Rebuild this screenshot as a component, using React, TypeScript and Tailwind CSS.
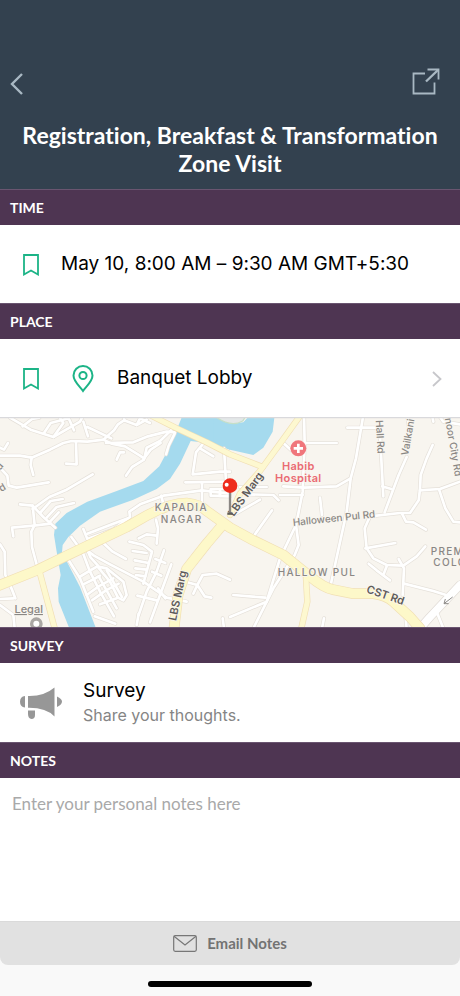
import { useState } from "react";
import type { ReactNode } from "react";

const minorRoads = [
  // west bank
  "M0 122 L60 122 L95 128 L150 104 L190 84 L215 78 L262 80 L310 74 L335 86 L375 94 L420 122 L432 130",
  "M95 128 L92 150 L100 180",
  "M0 98 L12 104 L24 84",
  "M228 82 L230 148 L198 146",
  "M350 134 L360 112 L372 112",
  "M378 182 L396 156 L432 134 L440 98 L480 78 L515 44",
  "M310 74 L342 46 L354 28 L372 16 L410 30 L440 14",
  "M318 84 L400 82 L444 64 L500 50 L525 52",
  "M432 130 L452 104 L482 84",
  "M30 8 L92 44 L160 66 L205 40 L240 20 L250 0",
  "M68 34 L96 12 L118 8",
  "M132 54 L152 24 L206 10 L222 46",
  "M160 66 L190 24 L178 6",
  "M250 20 L264 64 M262 36 L334 70",
  "M374 18 L370 0 M410 30 L420 10 L450 24",
  "M498 118 L506 92 L524 56",
  "M0 158 L22 182 L26 212 L50 218 L146 202",
  "M98 282 L148 246 L200 224 L278 178",
  "M60 268 L98 272 L130 306 L166 338",
  "M98 272 L104 330 L94 350 L96 396 L112 456",
  "M40 364 L36 338 L100 332 L152 326",
  "M120 294 L152 258 L188 252",
  "M140 308 L170 276 L222 264",
  "M150 320 L176 292",
  "M0 388 L14 410 L16 480 L36 524 L46 550",
  "M0 552 L40 550 M0 570 L40 600 L44 640",
  // east bank
  "M250 342 L262 372 L340 344 L390 306 L388 290 L420 268 L490 242 L606 226 L690 236",
  "M262 356 L340 326 L384 310",
  "M556 202 L690 200 M606 202 L606 262",
  "M632 222 L690 222 M632 222 L632 242 L690 244 M660 222 L660 244",
  "M608 88 L588 112 L578 178 L660 170 L690 170",
  "M600 100 L640 124 M672 100 L678 200",
  "M484 242 L490 268",
  "M214 366 L248 412 L270 470 L300 530 L342 604",
  "M250 398 L282 422 L330 448 L430 500 L500 548 L560 560",
  "M310 384 L338 410 L378 432",
  "M262 404 L272 428 L294 452",
  "M238 486 L268 468 L292 454 L320 460 L370 500 L380 540 L370 556 L354 548 L330 500 L292 454",
  "M250 508 L282 492 L300 482 M260 540 L296 514 L340 490 M276 556 L318 526 L356 506",
  "M206 436 L240 490 L280 590",
  "M296 484 L350 580 M320 466 L366 546",
  "M300 568 L350 550",
  "M284 604 L346 626",
  "M468 314 L474 340 L470 386 M416 370 L440 358 L470 362",
  "M388 380 L430 390 L456 410 L448 440 L430 506",
  "M398 408 L440 414 M404 436 L446 444 M406 460 L440 464 M408 480 L436 484",
  "M492 406 L470 470 L440 530 L416 600",
  "M514 448 L480 540 L450 622",
  "M412 542 L470 556 M416 596 L410 630",
  "M466 432 L496 444 M456 470 L484 482 M474 520 L496 550",
  "M556 500 L592 510 L608 480 L650 476 L690 494",
  "M592 510 L580 536 M592 510 L614 544 L634 548",
  "M668 610 L672 640",
  // Halloween Pul side
  "M912 0 L914 84 L908 230 L888 330 L896 390 L884 420 L820 520 L760 640",
  "M914 84 L1010 84",
  "M850 84 L874 106",
  "M1090 0 L1068 130 L1052 190 L1010 214 L912 218 L850 214",
  "M1052 190 L1040 290 L1016 400 L992 510",
  "M1042 38 L1140 38",
  "M720 216 L800 216 M740 238 L820 240 L836 256 M840 240 L908 240",
  "M700 300 L780 254",
  "M816 286 L762 362",
  "M960 248 L966 300",
  "M888 330 L840 430 L800 560 L690 606",
  "M700 540 L796 548",
  "M1140 60 L1150 244 M1146 214 L1174 222",
  "M1220 126 L1196 180 L1154 292",
  "M1110 304 L1200 294 L1230 294 L1256 256 L1260 222 L1262 180 L1280 130 L1298 90",
  "M1260 226 L1320 222 L1380 200",
  "M1206 296 L1218 320 L1240 322 L1278 344",
  "M1110 304 L1094 340 L1100 400 L1120 430 L1160 450 L1210 452 L1250 424 L1276 394",
  "M1096 400 L1186 384",
  "M1106 446 L1130 466 L1170 496 M1160 454 L1150 480",
  "M1196 432 L1212 460 L1208 540",
  "M1212 506 L1300 528 L1350 544",
  "M1318 226 L1336 280 L1360 320 L1380 322",
  "M1316 0 L1330 20 L1380 28",
  "M1222 0 L1230 60 M1296 0 L1300 20",
  "M972 610 L966 640 M1216 600 L1220 640",
  "M1310 590 L1330 640",
];

const wideRoads = ["M1260 640 L1290 606 L1380 510"];

const mainRoads = [
  "M-10 514 L110 466 L200 422 L380 336 L440 302 Q510 264 560 264 Q600 268 620 288 L690 338 L760 376 L850 420 L930 484 Q970 518 1000 524 L1060 536 L1120 536 Q1160 542 1180 560 L1230 606 L1260 640",
  "M664 334 L620 386 L560 462 L534 540 L522 640",
];

const yellowRoads = [
  "M450 0 L530 40 L620 82 L690 118 L788 156",
  "M902 0 L840 86 L780 168 L720 236 L690 300",
  "M118 468 L140 550 L164 640",
  "M918 490 L922 560 L904 640",
];

const HospitalBadge = () => (
  <g>
    <circle cx="895" cy="100" r="24" fill="#f0767c" />
    <path d="M895 86 V114 M881 100 H909" stroke="#fff" strokeWidth="8" />
  </g>
);

const MapPin = () => (
  <g>
    <path d="M690 225 V296" stroke="#8b8784" strokeWidth="7" />
    <path d="M682 296 H698" stroke="#5f5b58" strokeWidth="7" />
    <circle cx="690" cy="212" r="22" fill="#ee2b1c" />
    <circle cx="680" cy="209" r="6" fill="#fff" />
  </g>
);

const VenueMap = () => (
  <svg
    viewBox="0 6 1380 630"
    preserveAspectRatio="xMidYMid slice"
    className="block h-[210px] w-full bg-[#f8f5ef] font-['Inter','Liberation_Sans',sans-serif]"
    role="img"
    aria-label="Map of the venue"
  >
    <rect y="0" width="1380" height="640" fill="#f8f5ef" />
    <g fill="#a5daee">
      <path d="M548 0 L640 0 L690 26 L690 104 L640 86 L572 78 L540 146 L510 192 L470 222 L400 254 L300 290 L240 332 L205 366 L188 390 L186 412 L240 516 L288 640 L208 640 L176 560 L174 520 L182 480 L170 410 L162 360 L166 326 L200 294 L262 260 L340 232 L430 198 L478 154 L512 90 Z" />
      <path d="M640 0 L690 26 L730 22 L750 0 L824 0 L818 50 L790 98 L760 120 L690 104 L640 80 Z" />
    </g>
    <path
      d="M640 0 Q690 40 728 18 L740 0 Z"
      fill="#e3e7e8"
      stroke="#c5dfc8"
      strokeWidth="4"
    />
    <g fill="none" strokeLinecap="round" strokeLinejoin="round">
      {minorRoads.map((d) => (
        <path key={d} d={d} stroke="#e5e0d9" strokeWidth="12" />
      ))}
      {wideRoads.map((d) => (
        <path key={d} d={d} stroke="#e0dbd5" strokeWidth="27" />
      ))}
      {minorRoads.map((d) => (
        <path key={d} d={d} stroke="#fff" strokeWidth="8" />
      ))}
      {wideRoads.map((d) => (
        <path key={d} d={d} stroke="#fff" strokeWidth="23" />
      ))}
      {yellowRoads.map((d) => (
        <path key={d} d={d} stroke="#f1dfb4" strokeWidth="19" />
      ))}
      {mainRoads.map((d) => (
        <path key={d} d={d} stroke="#f1dfb4" strokeWidth="32" />
      ))}
      {yellowRoads.map((d) => (
        <path key={d} d={d} stroke="#fdf8d0" strokeWidth="15" />
      ))}
      {mainRoads.map((d) => (
        <path key={d} d={d} stroke="#fdf8c9" strokeWidth="28" />
      ))}
    </g>
    <g
      fill="#8a8784"
      stroke="#f8f5ef"
      strokeWidth="5"
      paintOrder="stroke"
      fontSize="30"
      fontWeight="500"
      textAnchor="middle"
    >
      <g letterSpacing="4">
        <text x="544" y="287">KAPADIA</text>
        <text x="545" y="323">NAGAR</text>
        <text x="951" y="483">HALLOW PUL</text>
        <text x="1292" y="420" textAnchor="start">PREMIER</text>
        <text x="1300" y="454" textAnchor="start">COLONY</text>
      </g>
      <text transform="translate(1003 320) rotate(-6)">Halloween Pul Rd</text>
      <text transform="translate(1130 66) rotate(87)">Hall Rd</text>
      <text transform="translate(1234 68) rotate(-80)">Vailkani</text>
      <text transform="translate(1350 98) rotate(80)">noor City Rd</text>
      <text transform="translate(12 226) rotate(-30)">d</text>
      <text transform="translate(6 160) rotate(-50)">d</text>
      <g fill="#5f5c59" fontWeight="600" fontSize="33">
        <text transform="translate(544 544) rotate(-78)">LBS Marg</text>
        <text transform="translate(746 244) rotate(-54)">LBS Marg</text>
        <text transform="translate(1153 551) rotate(19)">CST Rd</text>
      </g>
      <g fill="#ea6b73" fontWeight="600" fontSize="33" letterSpacing="1">
        <text x="895" y="164">Habib</text>
        <text x="895" y="201">Hospital</text>
      </g>
      <text x="86" y="594" fontSize="33" textDecoration="underline">
        Legal
      </text>
    </g>
    <circle
      cx="109"
      cy="626"
      r="14"
      fill="#fff"
      stroke="#aaa7a4"
      strokeWidth="10"
    />
    <path
      d="M1332 566 L1358 546 M1332 566 L1346 566 M1332 566 L1336 552"
      fill="none"
      stroke="#8f8c89"
      strokeWidth="3"
    />
    <path d="M0 8 H1380" stroke="#d9d9dc" strokeWidth="4" />
    <HospitalBadge />
    <MapPin />
  </svg>
);

const BackIcon = () => (
  <svg width="14" height="22" viewBox="0 0 14 22" fill="none" aria-hidden="true">
    <path d="M12 1 L2 11 L12 21" stroke="#a9b8c3" strokeWidth="2.4" />
  </svg>
);

const ShareIcon = () => (
  <svg width="28" height="28" viewBox="0 0 28 28" fill="none" aria-hidden="true">
    <g stroke="#a9b8c3" strokeWidth="1.8">
      <path d="M13 5.5 H1.5 V25.5 H22.5 V14.5" />
      <path d="M15.5 1.5 H26.5 V11.5" />
      <path d="M26 2 L14 13.5" strokeWidth="2.4" />
    </g>
  </svg>
);

const BookmarkIcon = () => (
  <svg width="16" height="22" viewBox="0 0 16 22" fill="none" aria-hidden="true">
    <path
      d="M1 1 H15 V20.5 L8 16.5 L1 20.5 Z"
      stroke="#1cb487"
      strokeWidth="1.8"
    />
  </svg>
);

const PlaceIcon = () => (
  <svg width="22" height="28" viewBox="0 0 22 28" fill="none" aria-hidden="true">
    <g stroke="#1cb487" strokeWidth="2">
      <path d="M11 26 C8 21.5 1.5 16.5 1.5 10.5 A9.5 9.5 0 0 1 20.5 10.5 C20.5 16.5 14 21.5 11 26 Z" />
      <circle cx="11" cy="10.5" r="3.6" />
    </g>
  </svg>
);

const ChevronIcon = () => (
  <svg width="10" height="16" viewBox="0 0 10 16" fill="none" aria-hidden="true">
    <path d="M1 1 L8.5 8 L1 15" stroke="#c7c7cb" strokeWidth="1.8" />
  </svg>
);

const MegaphoneIcon = () => (
  <svg width="42" height="32" viewBox="0 0 42 32" fill="#979797" aria-hidden="true">
    <path d="M5 9 V20.5 Q0 20 0 14.8 Q0 9.5 5 9 Z" />
    <path d="M8 9 Q24 9.5 34.5 0.5 V29.5 Q26 20.5 8 20.8 Z" />
    <path d="M37 9.5 Q42 12 42 14.5 Q42 17.5 37 20 Z" />
    <path d="M8 23.5 H15 V28 Q15 32 11.5 32 Q8 31.5 8 27 Z" />
  </svg>
);

const MailIcon = () => (
  <svg width="24" height="17" viewBox="0 0 24 17" fill="none" aria-hidden="true">
    <g stroke="#777" strokeWidth="1.2">
      <rect x="0.7" y="0.7" width="22.6" height="15.6" rx="1.5" />
      <path d="M1 1.2 L12 10 L23 1.2" />
    </g>
  </svg>
);

const SectionHeader = ({ children }: { children: ReactNode }) => (
  <h2 className="flex h-9 items-center border-t border-[#6a5570] bg-[#4e3552] px-2.5 pt-px text-sm font-bold text-white">
    {children}
  </h2>
);

const BookmarkButton = ({ label }: { label: string }) => {
  const [saved, setSaved] = useState(false);

  return (
    <button
      type="button"
      aria-label={label}
      aria-pressed={saved}
      className="cursor-pointer"
      onClick={() => setSaved(!saved)}
    >
      <BookmarkIcon />
    </button>
  );
};

export default function App() {
  const [notes, setNotes] = useState("");

  return (
    <div className="flex min-h-screen flex-col bg-white font-['Lato','Open_Sans',sans-serif] [font-variant-ligatures:none]">
      <header className="bg-[#33414f] pt-16 pb-3">
        <div className="flex h-10 items-center justify-between pr-5 pl-2.5">
          <button type="button" aria-label="Back" className="cursor-pointer">
            <BackIcon />
          </button>
          <button type="button" aria-label="Share" className="cursor-pointer pb-1">
            <ShareIcon />
          </button>
        </div>
        <h1 className="px-4 pt-[17px] text-center text-[23px] leading-7 font-bold text-white">
          Registration, Breakfast &amp; Transformation Zone Visit
        </h1>
      </header>
      <main className="flex grow flex-col">
        <SectionHeader>TIME</SectionHeader>
        <div className="flex h-[78px] items-center gap-[22px] px-[23px] pt-px font-['Inter','Liberation_Sans',sans-serif]">
          <BookmarkButton label="Bookmark time" />
          <p className="text-[19px] text-black">
            May 10, 8:00 AM – 9:30 AM GMT+5:30
          </p>
        </div>
        <SectionHeader>PLACE</SectionHeader>
        <div className="flex h-[78px] items-center gap-[33px] pt-px pr-[18px] pl-[23px] font-['Inter','Liberation_Sans',sans-serif]">
          <BookmarkButton label="Bookmark place" />
          <a href="#place" className="flex grow items-center">
            <PlaceIcon />
            <span className="grow pl-[23px] text-[19px] text-black">
              Banquet Lobby
            </span>
            <ChevronIcon />
          </a>
        </div>
        <VenueMap />
        <SectionHeader>SURVEY</SectionHeader>
        <a
          href="#survey"
          className="flex h-[79px] items-center gap-[21px] px-5 font-['Inter','Liberation_Sans',sans-serif]"
        >
          <MegaphoneIcon />
          <span className="flex flex-col">
            <span className="text-[19px] leading-6 text-black">Survey</span>
            <span className="text-base leading-6 text-[#858585]">
              Share your thoughts.
            </span>
          </span>
        </a>
        <SectionHeader>
          <label htmlFor="notes">NOTES</label>
        </SectionHeader>
        <textarea
          id="notes"
          value={notes}
          onChange={(event) => setNotes(event.target.value)}
          placeholder="Enter your personal notes here"
          className="block w-full grow resize-none px-3 py-3.5 text-[17px] leading-6 text-black outline-none placeholder:text-[#a9a9a9]"
        />
      </main>
      <footer className="bg-[#f9f9f9]">
        <button
          type="button"
          className="flex h-11 w-full cursor-pointer items-center justify-center gap-2.5 rounded-b-lg border-t border-[#dadada] bg-[#e1e1e1] text-[15px] font-bold text-[#737373]"
        >
          <MailIcon />
          Email Notes
        </button>
        <div className="flex h-[31px] justify-center pt-4">
          <div className="h-1.5 w-[164px] rounded-full bg-black" />
        </div>
      </footer>
    </div>
  );
}
